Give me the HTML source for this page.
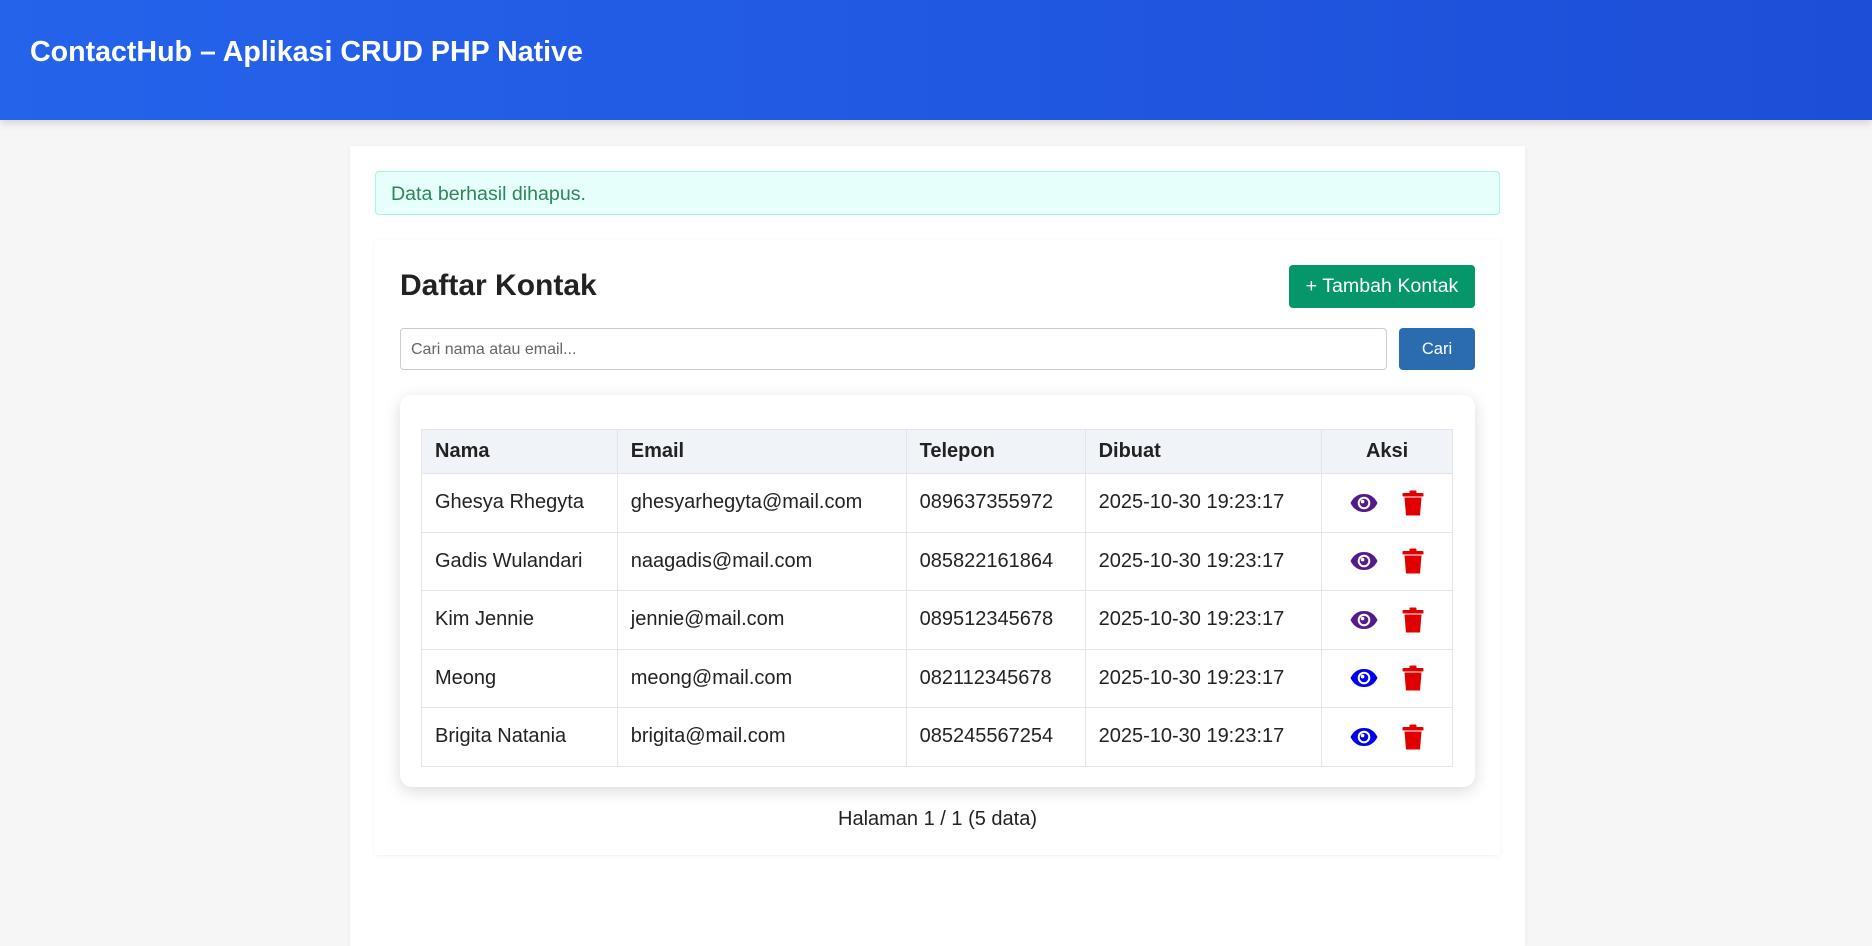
<!DOCTYPE html>
<html><head><meta charset="utf-8"><style>
*{box-sizing:border-box;margin:0;padding:0}
body{width:1872px;height:902px;overflow:hidden;background:#f6f6f6;font-family:"Liberation Sans",Arial,sans-serif;color:#222;position:relative}
.hdr{position:absolute;left:0;top:0;width:1872px;height:120px;background:linear-gradient(90deg,#2563eb,#1d4ed8);box-shadow:0 3px 8px rgba(0,0,0,.15)}
.hdr h1{position:absolute;left:30px;top:36px;font-size:28.6px;font-weight:bold;color:#fff}
.main{position:absolute;left:350px;top:146px;width:1175px;height:800px;background:#fff;box-shadow:0 1px 4px rgba(0,0,0,.06)}
.alert{position:absolute;left:375px;top:171px;width:1125px;height:44px;background:#e6fffa;border:1px solid #a7f3e4;border-radius:4px;color:#2f855a;font-size:19.6px;padding:11px 15px}
.card{position:absolute;left:375px;top:240px;width:1125px;height:615px;background:#fff;box-shadow:0 1px 5px rgba(0,0,0,.06)}
h2{position:absolute;left:400px;top:269px;font-size:30px;font-weight:bold;color:#222}
.add{position:absolute;left:1289px;top:265px;width:186px;height:43px;background:#059669;border-radius:4px;color:#fff;font-size:19.6px;text-align:center;line-height:43px}
.inp{position:absolute;left:400px;top:328px;width:987px;height:42px;border:1px solid #ccc;border-radius:4px;font-size:16px;color:#666;padding:12px 10px}
.cari{position:absolute;left:1399px;top:328px;width:76px;height:42px;background:#2b6cb0;border-radius:4px;color:#fff;font-size:16.5px;text-align:center;line-height:42px}
.tw{position:absolute;left:400px;top:395px;width:1075px;height:392px;background:#fff;border-radius:12px;box-shadow:0 4px 16px rgba(0,0,0,.15)}
table{position:absolute;left:421px;top:429px;width:1032px;border-collapse:collapse;font-size:20px}
th,td{border:1px solid #e2e5ea;padding:0 13px;text-align:left;color:#222}
th{background:#f0f3f8;height:44px;font-weight:bold}
td{height:58.5px}
.c{text-align:center}
.pg{position:absolute;left:375px;width:1125px;top:808px;text-align:center;font-size:20px}
svg{vertical-align:middle}
</style></head><body>
<div class="hdr"><h1>ContactHub – Aplikasi CRUD PHP Native</h1></div>
<div class="main"></div>
<div class="alert">Data berhasil dihapus.</div>
<div class="card"></div>
<h2>Daftar Kontak</h2>
<div class="add">+ Tambah Kontak</div>
<div class="inp">Cari nama atau email...</div>
<div class="cari">Cari</div>
<div class="tw"></div>
<table>
<colgroup><col style="width:196px"><col style="width:289px"><col style="width:179px"><col style="width:237px"><col style="width:131px"></colgroup>
<tr><th>Nama</th><th>Email</th><th>Telepon</th><th>Dibuat</th><th class="c">Aksi</th></tr>
<tr><td>Ghesya Rhegyta</td><td>ghesyarhegyta@mail.com</td><td>089637355972</td><td>2025-10-30 19:23:17</td><td class="c"><svg width="28" height="22" viewBox="0 0 28 22"><path d="M0.5 11C4 4 9 2 14 2S24 4 27.5 11C24 18 19 20 14 20S4 18 .5 11Z" fill="#551a8b"/><circle cx="14" cy="11" r="6.3" fill="#fff"/><circle cx="14" cy="11" r="4.3" fill="#551a8b"/><circle cx="12.6" cy="9.6" r="1.8" fill="#fff"/></svg><span style="display:inline-block;width:24px"></span><svg width="22" height="26" viewBox="0 0 22 26"><rect x="0.5" y="3" width="21" height="3.5" rx="1" fill="#e00000"/><rect x="7.5" y="0.5" width="7" height="3" rx="1" fill="#e00000"/><path d="M2.5 7.5H19.5L18 25.5H4Z" fill="#e00000"/></svg></td></tr>
<tr><td>Gadis Wulandari</td><td>naagadis@mail.com</td><td>085822161864</td><td>2025-10-30 19:23:17</td><td class="c"><svg width="28" height="22" viewBox="0 0 28 22"><path d="M0.5 11C4 4 9 2 14 2S24 4 27.5 11C24 18 19 20 14 20S4 18 .5 11Z" fill="#551a8b"/><circle cx="14" cy="11" r="6.3" fill="#fff"/><circle cx="14" cy="11" r="4.3" fill="#551a8b"/><circle cx="12.6" cy="9.6" r="1.8" fill="#fff"/></svg><span style="display:inline-block;width:24px"></span><svg width="22" height="26" viewBox="0 0 22 26"><rect x="0.5" y="3" width="21" height="3.5" rx="1" fill="#e00000"/><rect x="7.5" y="0.5" width="7" height="3" rx="1" fill="#e00000"/><path d="M2.5 7.5H19.5L18 25.5H4Z" fill="#e00000"/></svg></td></tr>
<tr><td>Kim Jennie</td><td>jennie@mail.com</td><td>089512345678</td><td>2025-10-30 19:23:17</td><td class="c"><svg width="28" height="22" viewBox="0 0 28 22"><path d="M0.5 11C4 4 9 2 14 2S24 4 27.5 11C24 18 19 20 14 20S4 18 .5 11Z" fill="#551a8b"/><circle cx="14" cy="11" r="6.3" fill="#fff"/><circle cx="14" cy="11" r="4.3" fill="#551a8b"/><circle cx="12.6" cy="9.6" r="1.8" fill="#fff"/></svg><span style="display:inline-block;width:24px"></span><svg width="22" height="26" viewBox="0 0 22 26"><rect x="0.5" y="3" width="21" height="3.5" rx="1" fill="#e00000"/><rect x="7.5" y="0.5" width="7" height="3" rx="1" fill="#e00000"/><path d="M2.5 7.5H19.5L18 25.5H4Z" fill="#e00000"/></svg></td></tr>
<tr><td>Meong</td><td>meong@mail.com</td><td>082112345678</td><td>2025-10-30 19:23:17</td><td class="c"><svg width="28" height="22" viewBox="0 0 28 22"><path d="M0.5 11C4 4 9 2 14 2S24 4 27.5 11C24 18 19 20 14 20S4 18 .5 11Z" fill="#0000ee"/><circle cx="14" cy="11" r="6.3" fill="#fff"/><circle cx="14" cy="11" r="4.3" fill="#0000ee"/><circle cx="12.6" cy="9.6" r="1.8" fill="#fff"/></svg><span style="display:inline-block;width:24px"></span><svg width="22" height="26" viewBox="0 0 22 26"><rect x="0.5" y="3" width="21" height="3.5" rx="1" fill="#e00000"/><rect x="7.5" y="0.5" width="7" height="3" rx="1" fill="#e00000"/><path d="M2.5 7.5H19.5L18 25.5H4Z" fill="#e00000"/></svg></td></tr>
<tr><td>Brigita Natania</td><td>brigita@mail.com</td><td>085245567254</td><td>2025-10-30 19:23:17</td><td class="c"><svg width="28" height="22" viewBox="0 0 28 22"><path d="M0.5 11C4 4 9 2 14 2S24 4 27.5 11C24 18 19 20 14 20S4 18 .5 11Z" fill="#0000ee"/><circle cx="14" cy="11" r="6.3" fill="#fff"/><circle cx="14" cy="11" r="4.3" fill="#0000ee"/><circle cx="12.6" cy="9.6" r="1.8" fill="#fff"/></svg><span style="display:inline-block;width:24px"></span><svg width="22" height="26" viewBox="0 0 22 26"><rect x="0.5" y="3" width="21" height="3.5" rx="1" fill="#e00000"/><rect x="7.5" y="0.5" width="7" height="3" rx="1" fill="#e00000"/><path d="M2.5 7.5H19.5L18 25.5H4Z" fill="#e00000"/></svg></td></tr>
</table>
<div class="pg">Halaman 1 / 1 (5 data)</div>
</body></html>
